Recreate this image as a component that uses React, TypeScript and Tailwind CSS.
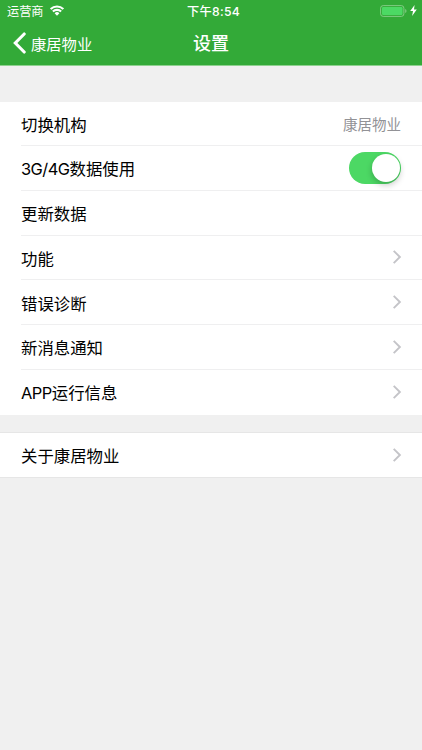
import type { ReactNode } from 'react';

function Chevron() {
  return (
    <svg className="h-[14px] w-[9px] text-[#c4c4c8]" viewBox="0 0 9 14" fill="none" stroke="currentColor" strokeWidth="1.9">
      <path d="M.7 .8 L6.9 7 L.7 13.2" />
    </svg>
  );
}

function Toggle() {
  return (
    <span className="flex h-8 w-[52px] items-center justify-end rounded-full bg-[#4cd864] pr-[1.5px]">
      <span className="size-[28px] rounded-full bg-white shadow-[0_3px_6px_rgba(0,0,0,0.22)]" />
    </span>
  );
}

type RowProps = { latin?: string; label: string; children?: ReactNode; first?: boolean; last?: boolean };

function Row({ latin, label, children, first = false, last = false }: RowProps) {
  return (
    <div className={`pl-[21px] ${first ? 'h-11' : 'h-[44.75px]'}`}>
      <div className={`flex h-full items-center justify-between border-b pr-5 ${last ? 'border-transparent' : 'border-[#efeff0]'}`}>
        <span className={`text-[16.4px] leading-6 text-black ${first ? 'pt-[2px]' : 'pt-[3px]'}`}>
          {latin && <span className="tracking-[-0.5px]">{latin}</span>}
          {label}
        </span>
        {children}
      </div>
    </div>
  );
}

export default function App() {
  return (
    <div className="h-[750px] w-[422px] overflow-hidden bg-[#f0f0f0] font-['Inter','Noto_Sans_CJK_SC',sans-serif]">
      <header className="h-[66px] border-b border-[#8ed18f] bg-[#33aa38] text-white">
        <div className="grid h-[22px] grid-cols-3 items-center pr-[5px] pl-[7px]">
          <div className="flex items-center gap-[6px]">
            <span className="pt-px text-[12.2px] leading-4">运营商</span>
            <svg className="-mt-px h-[11px] w-[14px]" viewBox="0 0 14 11" fill="none" stroke="white" strokeWidth="2.1">
              <path d="M.7 4.1 A8.8 8.8 0 0 1 13.3 4.1 M2.9 6.6 A5.7 5.7 0 0 1 11.1 6.6" />
              <path d="M4.6 8.2 A3.3 3.3 0 0 1 9.4 8.2 L7 10.7 Z" fill="white" stroke="none" />
            </svg>
          </div>
          <div className="pt-px pl-[3px] text-center text-[12.2px] leading-4 font-medium tracking-[0.3px] whitespace-nowrap">下午8:54</div>
          <div className="-mt-px flex items-center justify-end gap-[3px]">
            <svg className="h-[12px] w-[27px]" viewBox="0 0 27 12">
              <rect x=".6" y=".6" width="23.3" height="10.8" rx="2.6" fill="none" stroke="#82cc84" />
              <rect x="2" y="2" width="20.5" height="8" rx="1.2" fill="#4cd964" />
              <path d="M25.2 4 Q26.5 4.6 26.5 6 Q26.5 7.4 25.2 8Z" fill="#82cc84" />
            </svg>
            <svg className="h-[11px] w-[7px]" viewBox="0 0 7 11" fill="white">
              <path d="M4.6 0 L.2 6.1 H3 L2.1 11 L6.8 4.5 H4 Z" />
            </svg>
          </div>
        </div>
        <div className="grid h-[43px] grid-cols-3 items-center px-[13px]">
          <div className="flex items-center gap-[5px]">
            <svg className="-mt-px h-[22px] w-[13px]" viewBox="0 0 13 22" fill="none" stroke="white" strokeWidth="3.1" strokeLinecap="round">
              <path d="M11.2 2 L2.3 11 L11.2 20" />
            </svg>
            <span className="pt-[2px] text-[15.3px] leading-6 whitespace-nowrap">康居物业</span>
          </div>
          <h1 className="text-center text-[18px] leading-7 font-medium">设置</h1>
        </div>
      </header>
      <main>
        <section className="mt-9 bg-white">
          <Row label="切换机构" first>
            <span className="pt-[3px] pr-px text-[14.5px] leading-6 text-[#929296]">康居物业</span>
          </Row>
          <Row latin="3G/4G" label="数据使用">
            <span className="pt-px pr-px"><Toggle /></span>
          </Row>
          <Row label="更新数据" />
          <Row label="功能"><Chevron /></Row>
          <Row label="错误诊断"><Chevron /></Row>
          <Row label="新消息通知"><Chevron /></Row>
          <Row latin="APP" label="运行信息" last><Chevron /></Row>
        </section>
        <section className="mt-[17.5px] border-y border-[#e6e6e6] bg-white">
          <Row label="关于康居物业" first last><Chevron /></Row>
        </section>
      </main>
    </div>
  );
}
